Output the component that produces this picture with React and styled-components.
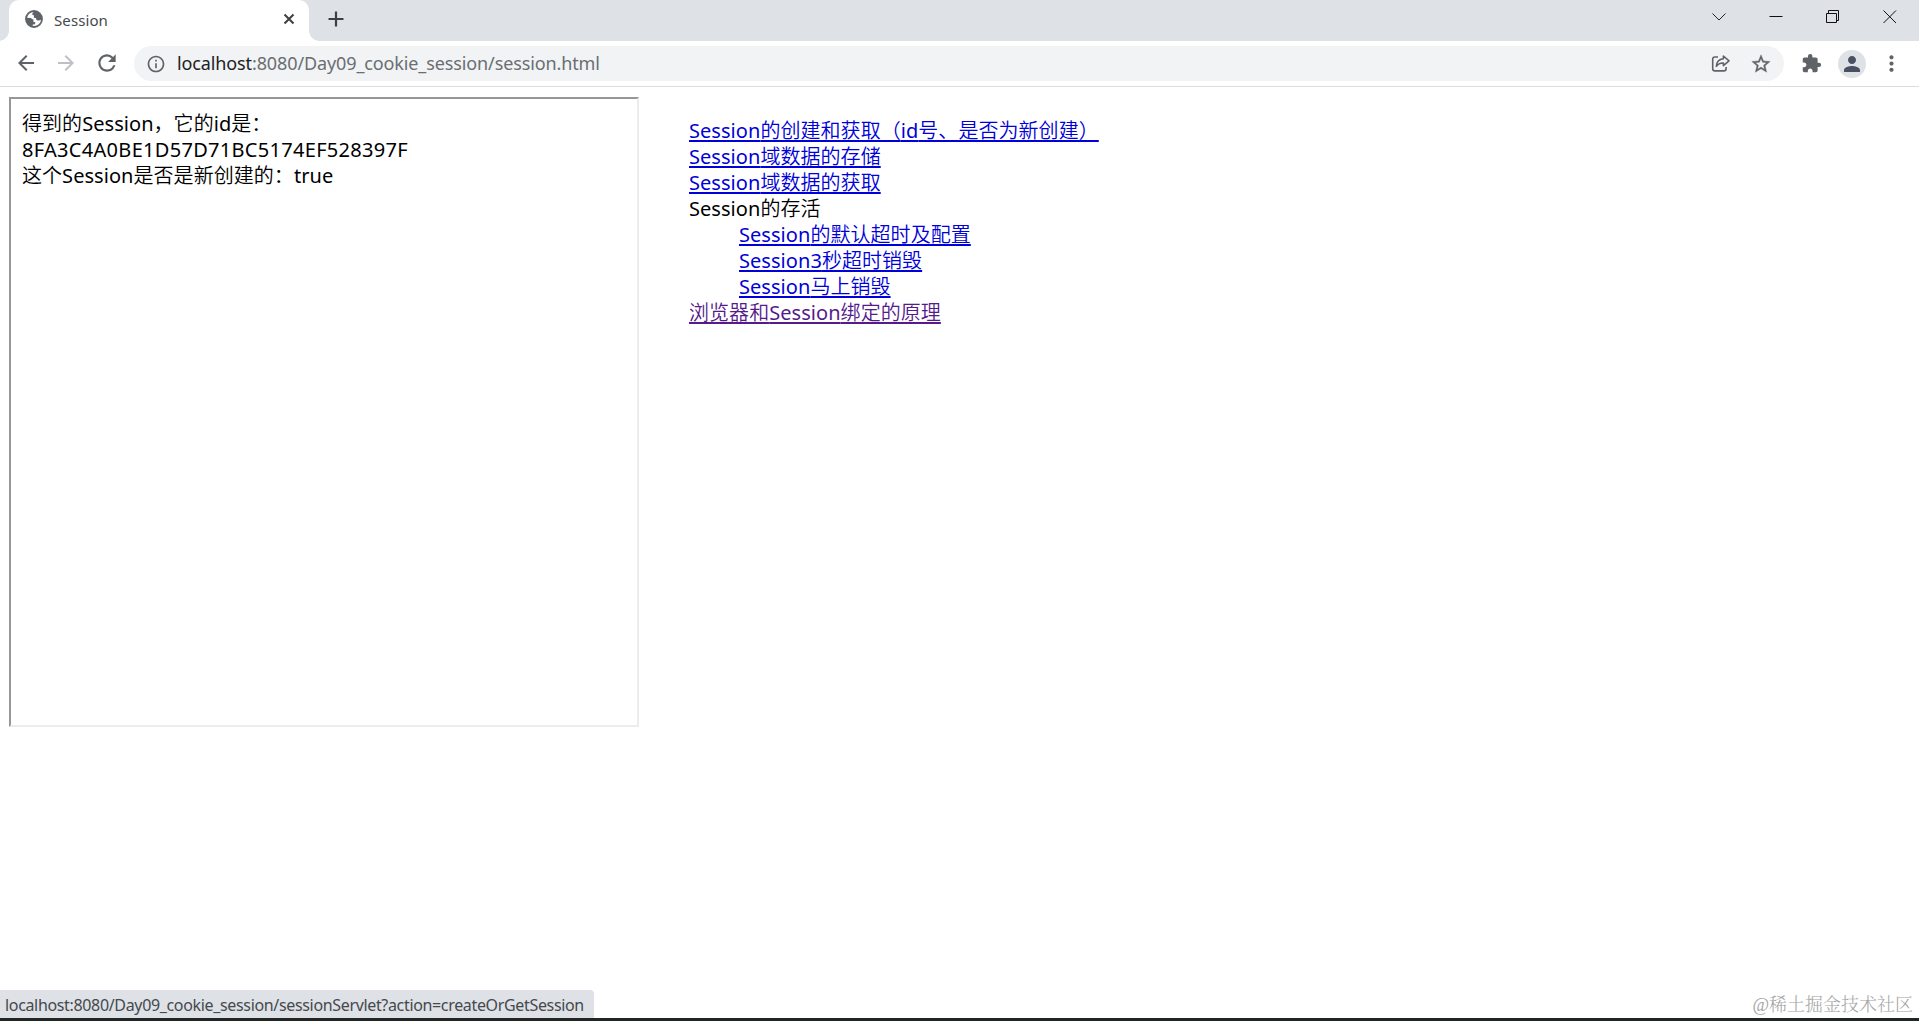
import React from "react"
import styled, { createGlobalStyle } from "styled-components"
import {
    MdArrowBack,
    MdArrowForward,
    MdRefresh,
    MdInfoOutline,
    MdStarOutline,
    MdExtension,
    MdPerson,
    MdMoreVert
} from "react-icons/md"

const sessionLinks = [
    { text: "Session的创建和获取（id号、是否为新创建）" },
    { text: "Session域数据的存储" },
    { text: "Session域数据的获取" },
    {
        text: "Session的存活",
        plain: true,
        children: [
            { text: "Session的默认超时及配置" },
            { text: "Session3秒超时销毁" },
            { text: "Session马上销毁" }
        ]
    },
    { text: "浏览器和Session绑定的原理", visited: true }
]

// chinese runs are set lighter than the latin ones
const MixedText = ({ children }) =>
    children
        .split(/([\u3000-\u9fff\uff00-\uffef]+)/)
        .filter(Boolean)
        .map((part, i) =>
            /[\u3000-\u9fff\uff00-\uffef]/.test(part) ? <Han key={ i }>{ part }</Han> : part
        )

const LinkList = ({ items }) => (
    <ListView>
        { items.map(item => (
            <li key={ item.text }>
                { item.plain ? (
                    <MixedText>{ item.text }</MixedText>
                ) : (
                    <LinkView href="#" $visited={ item.visited }>
                        <MixedText>{ item.text }</MixedText>
                    </LinkView>
                ) }
                { item.children && (
                    <NestedView>
                        <LinkList items={ item.children } />
                    </NestedView>
                ) }
            </li>
        )) }
    </ListView>
)

const GlobeIcon = () => (
    <svg width="18" height="18" viewBox="0 0 18 18" fill="#5f6368">
        <circle cx="9" cy="9" r="8" fill="none" stroke="#5f6368" strokeWidth="1.8" />
        <path d="M9.5 1L7.4 3.2V5L9.2 5.6L8.6 7.4L11 8.2L11.6 10.2L14 10.6L16.8 9.4A8 8 0 0 0 9.5 1Z" />
        <path d="M1 7.8L5.6 8L8.6 9.8L8.2 11.6L10.4 12.4L10 14.2L7.8 14.6L7.4 17A8 8 0 0 1 1 7.8Z" />
    </svg>
)

const ShareIcon = () => (
    <svg width="19" height="19" viewBox="0 0 19 19" fill="none" stroke="#5f6368" strokeWidth="1.6" strokeLinejoin="round">
        <path d="M7 3H3.9Q1.7 3 1.7 5.2V14.7Q1.7 16.9 3.9 16.9H12.9Q15.1 16.9 15.1 14.7V13" />
        <path d="M12.4 2L18 6.8L12.4 11.6V9Q7.6 8.8 5.4 12.4Q5.6 5.6 12.4 4.8Z" />
    </svg>
)

const StrokeIcon = ({ size, d, weight = 1, color = "#111" }) => (
    <svg width={ size } height={ size } viewBox={ `0 0 ${size} ${size}` } fill="none" stroke={ color } strokeWidth={ weight }>
        <path d={ d } />
    </svg>
)

const App = () => (
    <WindowView>
        <GlobalStyle />
        <TabStrip>
            <TabView>
                <GlobeIcon />
                <TabTitle>Session</TabTitle>
                <StrokeIcon size={ 12 } weight={ 2 } color="#3c4043" d="M1.5 1.5L10.5 10.5M10.5 1.5L1.5 10.5" />
            </TabView>
            <NewTab>
                <StrokeIcon size={ 16 } weight={ 2.2 } color="#3c4043" d="M0.5 8H15.5M8 0.5V15.5" />
            </NewTab>
            <CaptionButtons>
                <StrokeIcon size={ 14 } d="M0.5 3.5L7 10L13.5 3.5" weight={ 0.9 } />
                <StrokeIcon size={ 14 } d="M0.5 6.5H13.5" />
                <StrokeIcon size={ 14 } d="M0.5 3.5H10.5V12.5H0.5ZM2.5 3.5V0.5H12.5V10.5H10.5" />
                <StrokeIcon size={ 14 } d="M0.5 0.5L13 13M13 0.5L0.5 13" />
            </CaptionButtons>
        </TabStrip>
        <Toolbar>
            <NavButtons>
                <MdArrowBack size={ 24 } />
                <MdArrowForward size={ 24 } color="#bdc1c6" />
                <MdRefresh size={ 26 } />
            </NavButtons>
            <Omnibox>
                <MdInfoOutline size={ 20 } />
                <UrlView><b>localhost</b>:8080/Day09_cookie_session/session.html</UrlView>
                <ShareIcon />
                <MdStarOutline size={ 22 } stroke="#5f6368" strokeWidth={ 0.4 } />
            </Omnibox>
            <MdExtension size={ 21 } />
            <Avatar>
                <MdPerson size={ 24 } />
            </Avatar>
            <MdMoreVert size={ 25 } />
        </Toolbar>
        <PageView>
            <FrameView>
                <MixedText>得到的Session，它的id是：</MixedText>
                <br />
                <SessionId>8FA3C4A0BE1D57D71BC5174EF528397F</SessionId>
                <br />
                <MixedText>这个Session是否是新创建的：true</MixedText>
            </FrameView>
            <LinkList items={ sessionLinks } />
        </PageView>
        <BottomRow>
            <StatusView>localhost:8080/Day09_cookie_session/sessionServlet?action=createOrGetSession</StatusView>
            <Watermark>@稀土掘金技术社区</Watermark>
        </BottomRow>
    </WindowView>
)

const GlobalStyle = createGlobalStyle`
    body {
        margin: 0;
        background: #fff;
        font-family: "Noto Sans", "Noto Sans CJK SC", sans-serif;
    }
    svg {
        flex: none;
        display: block;
    }
`
const WindowView = styled.div`
    box-sizing: border-box;
    display: flex;
    flex-direction: column;
    height: 1021px;
    overflow: hidden;
    border-bottom: 3px solid #202624;
`
const TabStrip = styled.div`
    display: flex;
    height: 41px;
    padding-left: 9px;
    background: #dee1e6;
`
const TabView = styled.div`
    position: relative;
    box-sizing: border-box;
    display: flex;
    align-items: center;
    width: 300px;
    padding: 0 14px 3px 16px;
    border-radius: 10px 10px 0 0;
    background: #fff;

    &::before,
    &::after {
        content: "";
        position: absolute;
        bottom: 0;
        width: 10px;
        height: 10px;
    }
    &::before {
        right: 100%;
        background: radial-gradient(circle at 0 0, #dee1e6 9.5px, #fff 10px);
    }
    &::after {
        left: 100%;
        background: radial-gradient(circle at 100% 0, #dee1e6 9.5px, #fff 10px);
    }
`
const TabTitle = styled.span`
    flex: 1;
    margin-left: 11px;
    padding-top: 2px;
    font-size: 15px;
    letter-spacing: 0.1px;
    color: #45494d;
`
const NewTab = styled.div`
    display: flex;
    align-items: center;
    margin-left: 19px;
    padding-bottom: 3px;
`
const CaptionButtons = styled.div`
    display: flex;
    gap: 43px;
    margin-left: auto;
    padding: 10px 22px 0 0;
`
const Toolbar = styled.div`
    box-sizing: border-box;
    display: flex;
    align-items: center;
    height: 46px;
    padding: 0 15px 0 14px;
    border-bottom: 1px solid #dadce0;
    color: #5f6368;
`
const NavButtons = styled.div`
    display: flex;
    align-items: center;
    gap: 16px;
    width: 120px;
    padding-bottom: 1px;
`
const Omnibox = styled.div`
    box-sizing: border-box;
    display: flex;
    flex: 1;
    align-items: center;
    height: 35px;
    margin-right: 17px;
    padding: 0 12px;
    border-radius: 18px;
    background: #f1f3f4;
`
const UrlView = styled.span`
    flex: 1;
    margin-left: 11px;
    padding-bottom: 2px;
    font-size: 18px;
    letter-spacing: -0.12px;
    color: #6a6e73;

    b {
        font-weight: 400;
        color: #202124;
    }
    & + svg {
        margin-right: 20px;
    }
`
const Avatar = styled.div`
    display: flex;
    align-items: center;
    justify-content: center;
    width: 28px;
    height: 28px;
    margin: 0 13px 0 16px;
    border-radius: 50%;
    background: #dee1e6;
    color: #4a5061;
`
const PageView = styled.div`
    display: flex;
    flex: 1;
    align-items: flex-start;
    padding: 10px 9px 0;
    font-size: 20px;
    line-height: 26px;
    letter-spacing: 0.05px;
    color: #000;

    > ul {
        margin: 21px 0 0 50px;
    }
`
const Han = styled.span`
    font-family: "Noto Sans CJK SC", sans-serif;
    font-weight: 350;
    line-height: 1;
`
const FrameView = styled.div`
    box-sizing: border-box;
    width: 630px;
    height: 630px;
    padding: 12px 11px;
    border: 2px solid;
    border-color: #979797 #ececec #ececec #979797;
`
const SessionId = styled.span`
    letter-spacing: 0.3px;
`
const ListView = styled.ul`
    margin: 0;
    padding: 0;
    list-style: none;

    li {
        white-space: nowrap;
    }
`
const NestedView = styled.div`
    padding-left: 50px;
`
const LinkView = styled.a`
    color: ${ props => props.$visited ? "#551a8b" : "#0000d8" };
    text-decoration: underline;
    text-decoration-thickness: 2px;
    text-underline-offset: 2px;
    text-decoration-skip-ink: none;
`
const BottomRow = styled.div`
    display: flex;
    align-items: flex-end;
    justify-content: space-between;
    height: 28px;
`
const StatusView = styled.div`
    box-sizing: border-box;
    width: 594px;
    height: 28px;
    padding-left: 5px;
    border-top-right-radius: 4px;
    background: #dee1e6;
    font-size: 16px;
    letter-spacing: -0.34px;
    line-height: 30px;
    white-space: nowrap;
    color: #45494d;
`
const Watermark = styled.div`
    padding-right: 6px;
    font-family: "Liberation Serif", "Noto Serif CJK SC", "Noto Sans CJK SC", serif;
    font-size: 18px;
    font-weight: 300;
    line-height: 26px;
    color: #a5a5a5;
`

export default App
